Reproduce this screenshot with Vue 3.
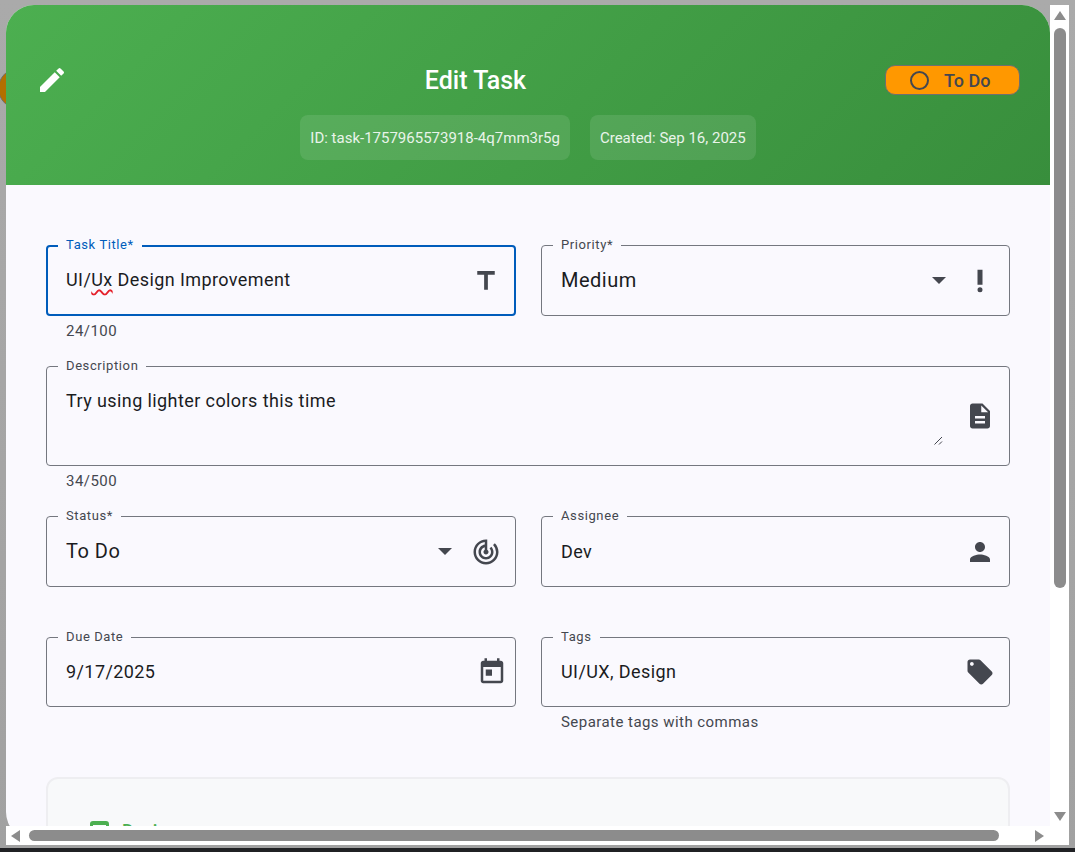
<script setup>
const leftRows = [
  { label: 'Status*', value: 'To Do', icon: 'radar', select: true },
  { label: 'Due Date', value: '9/17/2025', icon: 'calendar' }
]
const rightRows = [
  { label: 'Assignee', value: 'Dev', icon: 'person' },
  { label: 'Tags', value: 'UI/UX, Design', icon: 'tag', hint: 'Separate tags with commas' }
]
const icons = {
  title: 'M5 4v3h5.5v12h3V7H19V4z',
  priority: 'M10 3h4v12h-4zM12 17a2 2 0 1 0 0 4 2 2 0 0 0 0-4z',
  doc: 'M14 2H6c-1.1 0-2 .9-2 2v16c0 1.1.9 2 2 2h12c1.1 0 2-.9 2-2V8l-6-6zm2 16H8v-2h8v2zm0-4H8v-2h8v2zm-3-5V3.5L18.5 9H13z',
  radar: 'M19.07 4.93l-1.41 1.41A8.014 8.014 0 0 1 20 12c0 4.42-3.58 8-8 8s-8-3.58-8-8c0-4.08 3.05-7.44 7-7.93v2.02C8.16 6.57 6 9.03 6 12c0 3.31 2.69 6 6 6s6-2.69 6-6c0-1.66-.67-3.16-1.76-4.24l-1.41 1.41C15.55 9.9 16 10.9 16 12c0 2.21-1.79 4-4 4s-4-1.79-4-4c0-1.86 1.28-3.41 3-3.86v2.14c-.6.35-1 .98-1 1.72 0 1.1.9 2 2 2s2-.9 2-2c0-.74-.4-1.38-1-1.72V2h-1C6.48 2 2 6.48 2 12s4.48 10 10 10 10-4.48 10-10c0-2.76-1.12-5.26-2.93-7.07z',
  calendar: 'M19 3h-1V1h-2v2H8V1H6v2H5c-1.11 0-1.99.9-1.99 2L3 19c0 1.1.89 2 2 2h14c1.1 0 2-.9 2-2V5c0-1.1-.9-2-2-2zm0 16H5V8h14v11zM7 10h5v5H7z',
  person: 'M12 12c2.21 0 4-1.79 4-4s-1.79-4-4-4-4 1.79-4 4 1.79 4 4 4zm0 2c-2.67 0-8 1.34-8 4v2h16v-2c0-2.66-5.33-4-8-4z',
  tag: 'M21.41 11.58l-9-9C12.05 2.22 11.55 2 11 2H4c-1.1 0-2 .9-2 2v7c0 .55.22 1.05.59 1.42l9 9c.36.36.86.58 1.41.58.55 0 1.05-.22 1.41-.59l7-7c.37-.36.59-.86.59-1.41 0-.55-.23-1.06-.59-1.42zM5.5 7C4.67 7 4 6.33 4 5.5S4.67 4 5.5 4 7 4.67 7 5.5 6.33 7 5.5 7z',
  pencil: 'M3 17.25V21h3.75L17.81 9.94l-3.75-3.75L3 17.25zM20.71 7.04a1 1 0 0 0 0-1.41l-2.34-2.34a1 1 0 0 0-1.41 0l-1.83 1.83 3.75 3.75 1.83-1.83z'
}
</script>

<template>
  <div class="page">
    <span class="behind-dot"></span>
    <div class="frame">
      <div class="viewport">
        <div class="dialog">
          <header class="head">
            <div class="head-top">
              <svg class="pencil" viewBox="0 0 24 24"><path :d="icons.pencil" /></svg>
              <h1>Edit Task</h1>
              <div class="chip">
                <span class="chip-ring"></span>
                <span>To Do</span>
              </div>
            </div>
            <div class="meta">
              <span>ID: task-1757965573918-4q7mm3r5g</span>
              <span>Created: Sep 16, 2025</span>
            </div>
          </header>

          <div class="body">
            <div class="row first">
              <div class="field">
                <div class="box focused">
                  <label>Task Title*</label>
                  <span class="value">UI/<span class="typo">Ux</span> Design Improvement</span>
                  <svg class="ico" viewBox="0 0 24 24"><path :d="icons.title" /></svg>
                </div>
                <div class="hint">24/100</div>
              </div>
              <div class="field">
                <div class="box">
                  <label>Priority*</label>
                  <span class="value big">Medium</span>
                  <span class="caret"></span>
                  <svg class="ico" viewBox="0 0 24 24"><path :d="icons.priority" /></svg>
                </div>
              </div>
            </div>

            <div class="field">
              <div class="box area">
                <label>Description</label>
                <span class="value">Try using lighter colors this time</span>
                <svg class="grip" viewBox="0 0 9 9"><path d="M0.5 8.5 8 1M5 8.5 8 5.500" /></svg>
                <svg class="ico" viewBox="0 0 24 24"><path :d="icons.doc" /></svg>
              </div>
              <div class="hint">34/500</div>
            </div>

            <div class="cols">
              <div class="col">
                <div v-for="f in leftRows" :key="f.label" class="field">
                  <div class="box slim" :class="{ tall: f.select }">
                    <label>{{ f.label }}</label>
                    <span class="value" :class="{ big: f.select }">{{ f.value }}</span>
                    <span v-if="f.select" class="caret"></span>
                    <svg class="ico" :class="{ 'date-ico': f.icon === 'calendar' }" viewBox="0 0 24 24"><path :d="icons[f.icon]" /></svg>
                  </div>
                </div>
              </div>
              <div class="col">
                <div v-for="f in rightRows" :key="f.label" class="field">
                  <div class="box slim" :class="{ tall: f.label === 'Assignee' }">
                    <label>{{ f.label }}</label>
                    <span class="value">{{ f.value }}</span>
                    <svg class="ico" viewBox="0 0 24 24"><path :d="icons[f.icon]" /></svg>
                  </div>
                  <div v-if="f.hint" class="hint">{{ f.hint }}</div>
                </div>
              </div>
            </div>

            <section class="subtasks">
              <div class="sub-title">
                <span class="check"></span>
                <span>Design</span>
              </div>
            </section>
          </div>
        </div>
      </div>

      <div class="vbar">
        <span class="arrow up"></span>
        <span class="vthumb"></span>
        <span class="arrow down"></span>
      </div>
      <div class="hbar">
        <span class="arrow left"></span>
        <span class="hthumb"></span>
        <span class="arrow right"></span>
      </div>
      <div class="corner"></div>
    </div>
    <div class="taskbar"></div>
  </div>
</template>

<style>
html, body {
  margin: 0;
  overflow: hidden;
}
</style>

<style scoped>
.page {
  position: relative;
  width: 1075px;
  height: 852px;
  display: flex;
  flex-direction: column;
  background: linear-gradient(180deg, #aaaaaa 0%, #a1a1a1 100%);
  overflow: hidden;
  font-family: Roboto, "Liberation Sans", sans-serif;
}

.behind-dot {
  position: absolute;
  left: -2px;
  top: 68px;
  width: 41px;
  height: 41px;
  box-sizing: border-box;
  border-radius: 50%;
  background: #b36f00;
  border: 1px solid #6f6f6f;
}

.frame {
  position: relative;
  flex: 1;
  min-height: 0;
  margin: 5px 6px 3px;
  display: grid;
  grid-template-columns: 1fr 19px;
  grid-template-rows: 1fr 19px;
}

.viewport {
  overflow: hidden;
  min-height: 0;
}

.dialog {
  height: calc(100% + 14px);
  background: #faf9fe;
  border-radius: 28px 28px 0 28px;
  overflow: hidden;
}

.head {
  height: 180px;
  box-sizing: border-box;
  padding: 60px 30px 0;
  background: linear-gradient(135deg, #4caf50 0%, #388e3c 100%);
  color: #fff;
}

.head-top {
  display: flex;
  align-items: center;
  height: 30px;
}

.pencil {
  flex: none;
  width: 32px;
  height: 32px;
  fill: #fff;
}

.head-top h1 {
  flex: 1;
  margin: 2px 0 0;
  padding-right: 2px;
  text-align: center;
  font-size: 25px;
  line-height: 30px;
  font-weight: 500;
}

.chip {
  flex: none;
  width: 135px;
  height: 30px;
  box-sizing: border-box;
  display: flex;
  align-items: center;
  gap: 15px;
  padding-left: 24px;
  background: #ff9800;
  border: 1px solid #6f6f6f;
  border-radius: 10px;
  color: #44474f;
  font-size: 18px;
  font-weight: 500;
}

.chip-ring {
  width: 15px;
  height: 15px;
  border: 2px solid #44474f;
  border-radius: 50%;
}

.meta {
  display: flex;
  justify-content: center;
  gap: 20px;
  margin-top: 20px;
}

.meta span {
  height: 45px;
  box-sizing: border-box;
  padding: 0 10px;
  display: flex;
  align-items: center;
  background: rgba(255, 255, 255, 0.1);
  border-radius: 8px;
  color: #e9f4ea;
  font-size: 15px;
  font-weight: 400;
}

.body {
  padding: 60px 40px 0;
}

.row, .cols {
  display: grid;
  grid-template-columns: 470px 469px;
  gap: 25px;
}

.col {
  display: flex;
  flex-direction: column;
  gap: 50px;
}

.box {
  position: relative;
  display: flex;
  align-items: center;
  height: 71px;
  box-sizing: border-box;
  padding: 0 14.5px 0 19px;
  border: 1px solid #74777f;
  border-radius: 4px;
  color: #1a1c1e;
}

.box.slim {
  height: 70px;
}

.box.tall {
  height: 71px;
}

.box.area {
  height: 100px;
}

.box.focused {
  border: 2px solid #005cbb;
  padding: 0 13px 0 18px;
}

.box label {
  position: absolute;
  left: 11px;
  top: -9px;
  padding: 0 8px;
  background: #faf9fe;
  color: #44474f;
  font-size: 13px;
  line-height: 16px;
  letter-spacing: 0.6px;
}

.box.focused label {
  left: 10px;
  top: -10px;
  color: #005cbb;
}

.value {
  flex: 1;
  font-size: 18px;
  line-height: 24px;
  letter-spacing: 0.41px;
}

.value.big {
  margin-bottom: 2px;
  font-size: 20px;
  letter-spacing: 0.5px;
}

.focused .value {
  margin-bottom: 2px;
}

.area .value {
  align-self: flex-start;
  margin-top: 22px;
}

.typo {
  text-decoration: underline wavy #e5202a 1.5px;
  text-underline-offset: 3px;
}

.ico {
  flex: none;
  width: 30px;
  height: 30px;
  fill: #44474f;
}

.date-ico {
  margin-right: -6px;
}

.caret {
  flex: none;
  margin-right: 19px;
  width: 0;
  height: 0;
  border-left: 7px solid transparent;
  border-right: 7px solid transparent;
  border-top: 7px solid #44474f;
}

.grip {
  position: absolute;
  right: 66px;
  bottom: 20px;
  width: 9px;
  height: 9px;
  fill: none;
  stroke: #44474f;
  stroke-width: 1;
}

.hint {
  padding: 7px 0 0 20px;
  height: 16px;
  color: #44474f;
  font-size: 15px;
  line-height: 16px;
  letter-spacing: 0.45px;
}

.first {
  margin-bottom: 26px;
}

.first .field:first-child {
  height: 95px;
}

.body > .field {
  margin-bottom: 27px;
}

.subtasks {
  margin-top: 47px;
  height: 120px;
  box-sizing: border-box;
  padding: 41px 42px;
  background: #f8f9fa;
  border: 2px solid #eeeef1;
  border-radius: 12px;
}

.sub-title {
  display: flex;
  align-items: center;
  gap: 13px;
  color: #4caf50;
  font-size: 18px;
  font-weight: 500;
}

.check {
  width: 19px;
  height: 19px;
  box-sizing: border-box;
  border: 3px solid #4caf50;
  border-top-width: 4px;
  border-radius: 3px;
}

.vbar {
  display: flex;
  flex-direction: column;
  align-items: center;
  background: #fff;
}

.vthumb {
  width: 12px;
  height: 560px;
  margin: 8px 0 auto;
  background: #8c8c8c;
  border-radius: 6px;
}

.hbar {
  display: flex;
  align-items: center;
  background: #fff;
  padding: 0 5px;
}

.hthumb {
  width: 970px;
  height: 11px;
  margin: 0 auto 0 9px;
  background: #8c8c8c;
  border-radius: 6px;
}

.corner {
  background: #fff;
}

.arrow {
  width: 0;
  height: 0;
  flex: none;
}

.arrow.up {
  margin-top: 6px;
  border-left: 6px solid transparent;
  border-right: 6px solid transparent;
  border-bottom: 9px solid #8c8c8c;
}

.arrow.down {
  margin-bottom: 5px;
  border-left: 6px solid transparent;
  border-right: 6px solid transparent;
  border-top: 9px solid #8c8c8c;
}

.arrow.left {
  border-top: 6px solid transparent;
  border-bottom: 6px solid transparent;
  border-right: 9px solid #8c8c8c;
}

.arrow.right {
  margin-right: 1px;
  border-top: 6px solid transparent;
  border-bottom: 6px solid transparent;
  border-left: 9px solid #8c8c8c;
}

.taskbar {
  height: 4px;
  background: #202124;
}
</style>
